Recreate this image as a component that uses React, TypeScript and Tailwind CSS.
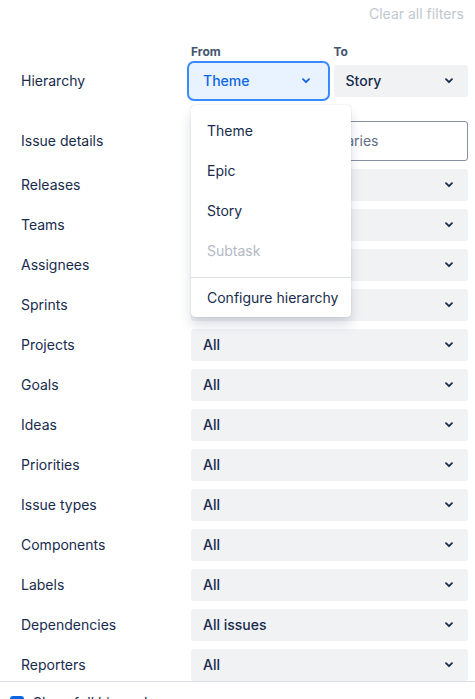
import React from 'react';

const ROWS: { label: string; value: string }[] = [
  { label: 'Releases', value: 'All' },
  { label: 'Teams', value: 'All' },
  { label: 'Assignees', value: 'All' },
  { label: 'Sprints', value: 'All' },
  { label: 'Projects', value: 'All' },
  { label: 'Goals', value: 'All' },
  { label: 'Ideas', value: 'All' },
  { label: 'Priorities', value: 'All' },
  { label: 'Issue types', value: 'All' },
  { label: 'Components', value: 'All' },
  { label: 'Labels', value: 'All' },
  { label: 'Dependencies', value: 'All issues' },
  { label: 'Reporters', value: 'All' },
];

const MENU = ['Theme', 'Epic', 'Story'];

const Chevron: React.FC<{ className?: string }> = ({ className }) => (
  <svg width="8" height="6" viewBox="0 0 8 6" fill="none" className={className}>
    <path d="M1 1.2l3 3 3-3" stroke="currentColor" strokeWidth="1.8" strokeLinecap="round" strokeLinejoin="round" />
  </svg>
);

const Select: React.FC<{ value: string }> = ({ value }) => (
  <div className="relative h-8 rounded-[3px] bg-[#f1f2f4] flex items-center pl-3 pr-8 text-sm font-medium text-[#172b4d]">
    {value}
    <Chevron className="absolute right-[15px] top-[13px] text-[#172b4d]" />
  </div>
);

export default function App() {
  return (
    <div
      className="w-[475px] h-[699px] overflow-hidden bg-white flex flex-col text-[#172b4d]"
      style={{ fontFamily: 'Inter, "Noto Sans", sans-serif' }}
    >
      <div className="flex-1 overflow-hidden">
        <div className="h-7 flex justify-end pr-[11px] pt-[6px]">
          <span className="text-sm leading-4 text-[#c1c7d0]">Clear all filters</span>
        </div>

        {/* hierarchy */}
        <div className="mt-4 grid grid-cols-[170px_277px] pl-[21px]">
          <div />
          <div className="grid grid-cols-2 gap-2 text-xs font-bold leading-4 text-[#44546f]">
            <span>From</span>
            <span>To</span>
          </div>
          <div className="h-8 mt-[5px] flex items-center text-sm">Hierarchy</div>
          <div className="mt-[5px] grid grid-cols-2 gap-2">
            <div className="relative">
              <div className="relative h-8 rounded-[3px] bg-[#e9f2ff] shadow-[0_0_0_2px_#e9f2ff,0_0_0_4px_#388bff] flex items-center pl-3 text-sm font-medium text-[#0c66e4]">
                Theme
                <Chevron className="absolute right-4 top-[13px] text-[#0c66e4]" />
              </div>
              <div className="absolute left-0 top-10 z-10 w-40 rounded-[4px] bg-white shadow-[0_8px_12px_rgba(9,30,66,0.15),0_0_1px_rgba(9,30,66,0.31)]">
                <div className="py-[6px]">
                  {MENU.map((m) => (
                    <div key={m} className="h-10 flex items-center px-4 text-sm whitespace-nowrap text-[#172b4d]">
                      {m}
                    </div>
                  ))}
                  <div className="h-10 flex items-center px-4 text-sm text-[#b3b9c4]">Subtask</div>
                </div>
                <div className="border-t border-[#dcdfe4] h-10 flex items-center px-4 text-sm whitespace-nowrap text-[#172b4d]">
                  Configure hierarchy
                </div>
              </div>
            </div>
            <Select value="Story" />
          </div>
        </div>

        {/* issue details */}
        <div className="mt-6 grid grid-cols-[170px_277px] pl-[21px]">
          <div className="h-10 flex items-center text-sm">Issue details</div>
          <div className="h-10 rounded-[3px] border border-[#8590a2] flex items-center px-3 text-sm whitespace-nowrap text-[#626f86]">
            Issue keys and summaries
          </div>
        </div>

        <div className="mt-2 flex flex-col gap-2 pl-[21px]">
          {ROWS.map((r) => (
            <div key={r.label} className="grid grid-cols-[170px_277px]">
              <div className="h-8 flex items-center text-sm">{r.label}</div>
              <Select value={r.value} />
            </div>
          ))}
        </div>
      </div>

      <div className="h-[18px] shrink-0 border-t border-[#dcdfe4] flex items-start gap-[9px] pl-[10px] pt-[13px]">
        <span className="mt-px w-[14px] h-[14px] shrink-0 rounded-[3px] bg-[#0c66e4]" />
        <span className="text-sm leading-4 text-[#172b4d]">Show full hierarchy</span>
      </div>
    </div>
  );
}
